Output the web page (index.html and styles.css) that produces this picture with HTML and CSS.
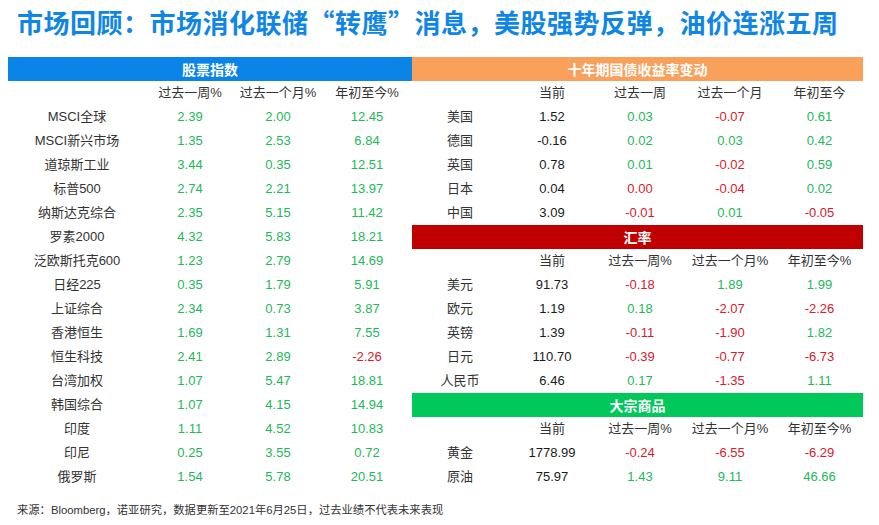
FILE: index.html
```html
<!DOCTYPE html>
<html lang="zh-CN">
<head>
<meta charset="utf-8">
<link rel="stylesheet" href="styles.css">
</head>
<body>
<div class="page">
  <h1 class="title">市场回顾：市场消化联储“转鹰”消息，美股强势反弹，油价连涨五周</h1>
  <div class="tables">
    <div class="panel left">
      <div class="bar blue">股票指数</div>
      <div class="row lrow head"><span></span><span>过去一周%</span><span>过去一个月%</span><span>年初至今%</span></div>
      <div class="row lrow"><span class="lab">MSCI全球</span><span class="g">2.39</span><span class="g">2.00</span><span class="g">12.45</span></div>
      <div class="row lrow"><span class="lab">MSCI新兴市场</span><span class="g">1.35</span><span class="g">2.53</span><span class="g">6.84</span></div>
      <div class="row lrow"><span class="lab">道琼斯工业</span><span class="g">3.44</span><span class="g">0.35</span><span class="g">12.51</span></div>
      <div class="row lrow"><span class="lab">标普500</span><span class="g">2.74</span><span class="g">2.21</span><span class="g">13.97</span></div>
      <div class="row lrow"><span class="lab">纳斯达克综合</span><span class="g">2.35</span><span class="g">5.15</span><span class="g">11.42</span></div>
      <div class="row lrow"><span class="lab">罗素2000</span><span class="g">4.32</span><span class="g">5.83</span><span class="g">18.21</span></div>
      <div class="row lrow"><span class="lab">泛欧斯托克600</span><span class="g">1.23</span><span class="g">2.79</span><span class="g">14.69</span></div>
      <div class="row lrow"><span class="lab">日经225</span><span class="g">0.35</span><span class="g">1.79</span><span class="g">5.91</span></div>
      <div class="row lrow"><span class="lab">上证综合</span><span class="g">2.34</span><span class="g">0.73</span><span class="g">3.87</span></div>
      <div class="row lrow"><span class="lab">香港恒生</span><span class="g">1.69</span><span class="g">1.31</span><span class="g">7.55</span></div>
      <div class="row lrow"><span class="lab">恒生科技</span><span class="g">2.41</span><span class="g">2.89</span><span class="r">-2.26</span></div>
      <div class="row lrow"><span class="lab">台湾加权</span><span class="g">1.07</span><span class="g">5.47</span><span class="g">18.81</span></div>
      <div class="row lrow"><span class="lab">韩国综合</span><span class="g">1.07</span><span class="g">4.15</span><span class="g">14.94</span></div>
      <div class="row lrow"><span class="lab">印度</span><span class="g">1.11</span><span class="g">4.52</span><span class="g">10.83</span></div>
      <div class="row lrow"><span class="lab">印尼</span><span class="g">0.25</span><span class="g">3.55</span><span class="g">0.72</span></div>
      <div class="row lrow"><span class="lab">俄罗斯</span><span class="g">1.54</span><span class="g">5.78</span><span class="g">20.51</span></div>
    </div>
    <div class="panel right">
      <div class="bar orange">十年期国债收益率变动</div>
      <div class="row rrow head"><span></span><span>当前</span><span>过去一周</span><span>过去一个月</span><span>年初至今</span></div>
      <div class="row rrow"><span class="lab">美国</span><span class="k">1.52</span><span class="g">0.03</span><span class="r">-0.07</span><span class="g">0.61</span></div>
      <div class="row rrow"><span class="lab">德国</span><span class="k">-0.16</span><span class="g">0.02</span><span class="g">0.03</span><span class="g">0.42</span></div>
      <div class="row rrow"><span class="lab">英国</span><span class="k">0.78</span><span class="g">0.01</span><span class="r">-0.02</span><span class="g">0.59</span></div>
      <div class="row rrow"><span class="lab">日本</span><span class="k">0.04</span><span class="r">0.00</span><span class="r">-0.04</span><span class="g">0.02</span></div>
      <div class="row rrow"><span class="lab">中国</span><span class="k">3.09</span><span class="r">-0.01</span><span class="g">0.01</span><span class="r">-0.05</span></div>
      <div class="bar red">汇率</div>
      <div class="row rrow head"><span></span><span>当前</span><span>过去一周%</span><span>过去一个月%</span><span>年初至今%</span></div>
      <div class="row rrow"><span class="lab">美元</span><span class="k">91.73</span><span class="r">-0.18</span><span class="g">1.89</span><span class="g">1.99</span></div>
      <div class="row rrow"><span class="lab">欧元</span><span class="k">1.19</span><span class="g">0.18</span><span class="r">-2.07</span><span class="r">-2.26</span></div>
      <div class="row rrow"><span class="lab">英镑</span><span class="k">1.39</span><span class="r">-0.11</span><span class="r">-1.90</span><span class="g">1.82</span></div>
      <div class="row rrow"><span class="lab">日元</span><span class="k">110.70</span><span class="r">-0.39</span><span class="r">-0.77</span><span class="r">-6.73</span></div>
      <div class="row rrow"><span class="lab">人民币</span><span class="k">6.46</span><span class="g">0.17</span><span class="r">-1.35</span><span class="g">1.11</span></div>
      <div class="bar green">大宗商品</div>
      <div class="row rrow head"><span></span><span>当前</span><span>过去一周%</span><span>过去一个月%</span><span>年初至今%</span></div>
      <div class="row rrow"><span class="lab">黄金</span><span class="k">1778.99</span><span class="r">-0.24</span><span class="r">-6.55</span><span class="r">-6.29</span></div>
      <div class="row rrow"><span class="lab">原油</span><span class="k">75.97</span><span class="g">1.43</span><span class="g">9.11</span><span class="g">46.66</span></div>
    </div>
  </div>
  <p class="source">来源：Bloomberg，诺亚研究，数据更新至2021年6月25日，过去业绩不代表未来表现</p>
</div>
</body>
</html>
```

FILE: styles.css
```css
html, body {
  margin: 0;
  padding: 0;
  background: #ffffff;
}
.page {
  width: 879px;
  height: 525px;
  font-family: "Liberation Sans", "Noto Sans CJK SC", sans-serif;
  color: #222222;
}
.title {
  margin: 0;
  padding: 5px 0 0 17px;
  height: 50px;
  box-sizing: border-box;
  font-family: "Noto Sans CJK SC", sans-serif;
  font-weight: 700;
  font-size: 26px;
  letter-spacing: 0.5px;
  line-height: 34px;
  color: #0f86e6;
  white-space: nowrap;
}
.tables {
  display: flex;
  margin-top: 7px;
  padding-left: 8px;
}
.panel.left { width: 404px; }
.panel.right { width: 451px; }
.bar {
  height: 24px;
  line-height: 24px;
  text-align: center;
  color: #ffffff;
  font-family: "Noto Sans CJK SC", sans-serif;
  font-weight: 700;
  font-size: 14px;
}
.bar.blue { background: #0b84e8; }
.bar.orange { background: #f9a05a; }
.bar.red { background: #c00000; }
.bar.green { background: #00c85a; }
.row {
  display: grid;
  height: 24px;
  align-items: center;
  font-size: 13px;
  text-align: center;
}
.row span {
  line-height: 24px;
  white-space: nowrap;
}
.lrow { grid-template-columns: 138px 88px 88px 90px; }
.rrow { grid-template-columns: 96px 88px 88px 92px 87px; }
.head span {
  color: #333333;
}
.lab { color: #333333; }
.k { color: #1a1a1a; }
.g { color: #22b85a; }
.r { color: #d4202c; }
.source {
  margin: 13px 0 0 17px;
  font-size: 11.3px;
  line-height: 16px;
  color: #333333;
}
```
